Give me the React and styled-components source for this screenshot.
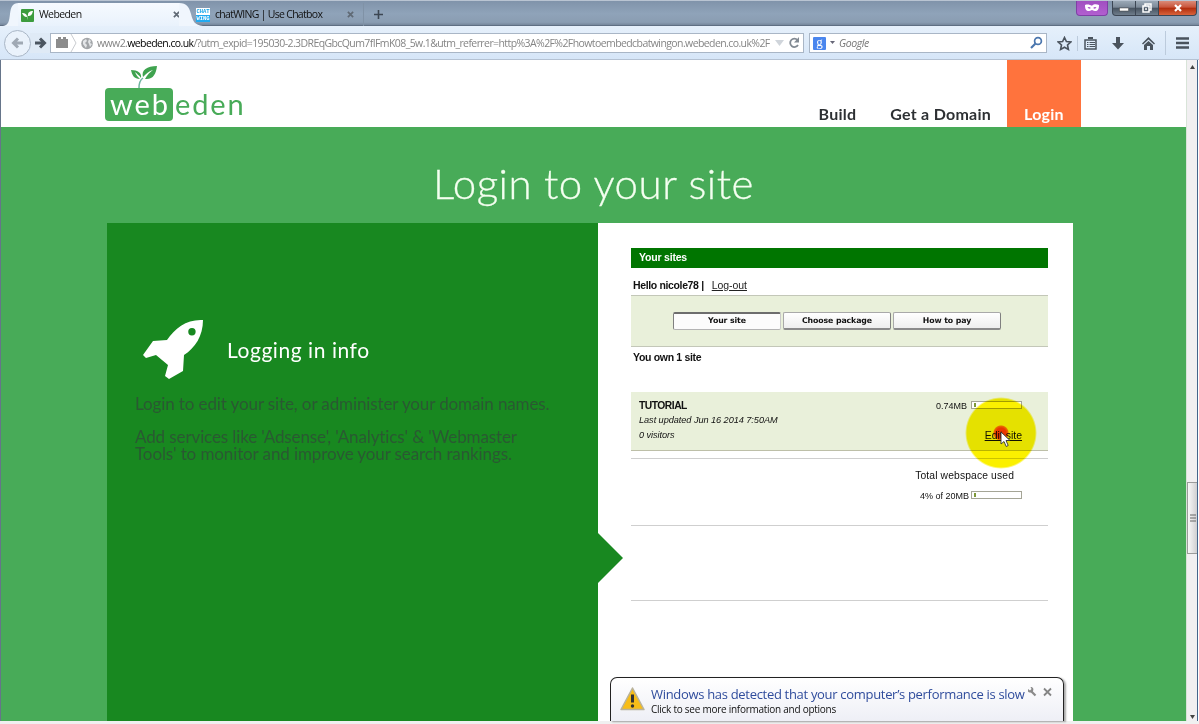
import React from 'react';
import styled, { createGlobalStyle, css } from 'styled-components';

const Global = createGlobalStyle`
  * { box-sizing: border-box; }
  html, body { margin: 0; padding: 0; overflow: hidden; }
`;

const ui = "'Open Sans', 'Noto Sans', sans-serif";
const brand = "'Lato', 'Open Sans', sans-serif";
const arial = "'Liberation Sans', Arial, sans-serif";

const Window = styled.div`
  position: relative;
  width: 1199px;
  height: 724px;
  overflow: hidden;
  display: flex;
  flex-direction: column;
  background: #f0f0f0;
`;

/* ---------- tab strip ---------- */
const TabStrip = styled.div`
  height: 26px;
  flex: none;
  display: flex;
  align-items: flex-end;
  padding-left: 3px;
  border-top: 1px solid #b9c4d2;
  background: linear-gradient(#8093aa, #8fa3b9 50%, #8a9db2 85%, #6e7f93);
  box-shadow: inset 0 -1px #5f6f83;
  font: 10.5px ${ui};
  color: #111;
`;
const Curve = styled.svg`
  display: block;
  flex: none;
  height: 23px;
`;
const ActiveTab = styled.div`
  display: flex;
  align-items: center;
  width: 162px;
  height: 23px;
  padding: 0 0 0 1px;
  margin: 0 -1px;
  background: linear-gradient(#f6faff, #e9f2fc);
`;
const Tab = styled.div`
  display: flex;
  align-items: center;
  width: 172px;
  height: 23px;
  padding: 0 9px 0 4px;
  margin-left: -11px;
  border-right: 1px solid #8092a6;
`;
const TabLabel = styled.span`
  flex: 1;
  margin-left: 5px;
  padding-bottom: 1px;
  letter-spacing: ${(p) => p.$track};
  white-space: nowrap;
`;
const NewTab = styled.div`
  display: flex;
  align-items: center;
  height: 23px;
  padding-left: 10px;
`;
const ChatIcon = styled.span`
  width: 14px;
  height: 14px;
  display: flex;
  flex-direction: column;
  font: bold 5.5px/7px 'Liberation Mono', monospace;
  text-align: center;
  background: #fff;
  color: #19a5e8;
  b + b { background: #22aaf0; color: #fff; }
`;
const WindowButtons = styled.div`
  align-self: flex-start;
  display: flex;
  margin: 0 2px 0 auto;
`;
const Private = styled.div`
  width: 32px;
  height: 15px;
  margin-right: 5px;
  display: flex;
  justify-content: center;
  align-items: center;
  border: 1px solid #7f3fa5;
  border-top: 0;
  border-radius: 0 0 4px 4px;
  background: linear-gradient(#a04fc0, #b25fd0);
`;
const WinBtn = styled.div`
  width: ${(p) => p.$w}px;
  height: 15px;
  display: flex;
  justify-content: center;
  align-items: center;
  border: 1px solid #3c4654;
  border-top: 0;
  margin-left: -1px;
  background: linear-gradient(#9aa8b6, #7c8998 45%, #46525f 50%, #6f7d8c);
  ${(p) => p.$first && css`border-bottom-left-radius: 4px;`}
  ${(p) => p.$close && css`
    background: linear-gradient(#d98b78, #c9543a 45%, #b02c0c 50%, #d9633c);
    border-bottom-right-radius: 4px;
  `}
`;

/* ---------- navigation bar ---------- */
const NavBar = styled.div`
  height: 34px;
  flex: none;
  display: flex;
  align-items: center;
  padding: 1px 9px 0 4px;
  border-bottom: 1px solid #b5c2d3;
  background: linear-gradient(#e6f0fb, #d6e6f8);
  font: 10.5px ${ui};
`;
const Back = styled.div`
  width: 27px;
  height: 27px;
  display: flex;
  justify-content: center;
  align-items: center;
  border: 1px solid #a9b6c6;
  border-radius: 50%;
  background: #eaf2fb;
  z-index: 1;
`;
const Forward = styled.div`
  width: 20px;
  height: 20px;
  margin-left: -1px;
  display: flex;
  justify-content: center;
  align-items: center;
  background: #dfeaf6;
`;
const Field = styled.div`
  display: flex;
  align-items: center;
  width: ${(p) => p.$w}px;
  height: 20px;
  margin-left: ${(p) => p.$ml || 0}px;
  border: 1px solid #a9b6c6;
  background: #fff;
`;
const Identity = styled.div`
  display: flex;
  align-items: center;
  width: 26px;
  height: 18px;
  padding-left: 4px;
`;
const Url = styled.div`
  width: 675px;
  margin-left: 2px;
  white-space: nowrap;
  letter-spacing: -0.59px;
  color: #858585;
  b { font-weight: 400; color: #000; }
`;
const SearchHint = styled.span`
  flex: 1;
  margin-left: 4px;
  font-style: italic;
  letter-spacing: -0.4px;
  color: #777;
`;
const GoogleBadge = styled.span`
  width: 13px;
  height: 13px;
  margin: 0 4px 0 3px;
  border-radius: 1px;
  background: #4a86ee;
  color: #fff;
  font: 13px/10px 'Liberation Serif', serif;
  text-align: center;
`;
const ToolIcons = styled.div`
  display: flex;
  align-items: center;
  padding-left: 10px;
`;
const ToolIcon = styled.svg`
  display: block;
  flex: none;
  margin-left: ${(p) => p.$ml || 0}px;
`;
const Separator = styled.i`
  width: 1px;
  height: ${(p) => p.$h}px;
  margin-left: ${(p) => p.$ml}px;
  background: #bccbdc;
`;

/* ---------- page ---------- */
const Viewport = styled.div`
  height: 661px;
  display: flex;
  border-left: 1px solid #66758a;
`;
const Page = styled.main`
  width: 1185px;
  height: 661px;
  overflow: hidden;
  display: flex;
  flex-direction: column;
  background: #48ab58;
`;
const Header = styled.header`
  height: 67px;
  flex: none;
  display: flex;
  justify-content: space-between;
  padding: 0 105px 0 104px;
  background: #fff;
  font-family: ${brand};
`;
const Logo = styled.div`
  display: flex;
  flex-direction: column;
  padding-top: 5px;
`;
const Sprout = styled.svg`
  display: block;
  width: 28px;
  height: 23px;
  margin-left: 26px;
`;
const Wordmark = styled.div`
  display: flex;
  font: 29px/32px ${brand};
  letter-spacing: 1.9px;
  color: #48ab58;
`;
const WebBox = styled.span`
  width: 68px;
  height: 33px;
  margin-right: 2px;
  padding-left: 5px;
  border-radius: 4px;
  background: #48ab58;
  color: #fff;
`;
const Nav = styled.nav`
  display: flex;
  align-items: flex-end;
  font: 700 16px/20px ${brand};
  letter-spacing: 0.25px;
  color: #2d3033;
`;
const NavLink = styled.a`
  padding: 0 16px 3px 18px;
  white-space: nowrap;
  ${(p) => p.$active && css`
    height: 67px;
    width: 74px;
    padding: 44px 0 3px 17px;
    background: #ff733d;
    color: #fff;
  `}
`;
const Title = styled.h1`
  height: 96px;
  flex: none;
  margin: 0;
  padding-top: 32px;
  font: 300 42px/48px ${brand};
  letter-spacing: 0.5px;
  text-align: center;
  color: #f4fff0;
  -webkit-text-stroke: 0.3px #f4fff0;
`;
const Card = styled.section`
  display: flex;
  height: 498px;
  margin-left: 106px;
  width: 966px;
  background: #fff;
`;
const Info = styled.div`
  position: relative;
  width: 491px;
  padding: 95px 28px 0;
  background: #188820;
  font: 17px/17px ${brand};
  color: #2a5832;
`;
const Pointer = styled.svg`
  position: absolute;
  left: 491px;
  top: 310px;
`;
const InfoHead = styled.div`
  display: flex;
  align-items: center;
  height: 64px;
  padding-left: 7px;
  margin-bottom: 13px;
`;
const InfoTitle = styled.h2`
  margin: 0 0 1px 23px;
  font: 400 21px/24px ${brand};
  letter-spacing: 0.55px;
  color: #fff;
`;
const InfoLine = styled.div`
  white-space: nowrap;
  letter-spacing: -0.11px;
  margin-bottom: ${(p) => p.$gap || 0}px;
`;

/* ---------- account panel ---------- */
const Account = styled.div`
  width: 475px;
  padding: 25px 25px 0 33px;
  font: 11px/14px ${arial};
  color: #111;
`;
const Bar = styled.div`
  height: 20px;
  padding-left: 8px;
  background: #007500;
  color: #fff;
  font: bold 10.5px/19px ${arial};
  letter-spacing: -0.2px;
`;
const Hello = styled.div`
  display: flex;
  height: 27px;
  padding: 10px 0 0 2px;
  font-size: 10.5px;
  b { letter-spacing: -0.36px; }
  u { margin-left: 8px; color: #222; letter-spacing: -0.05px; }
`;
const ButtonBand = styled.div`
  display: flex;
  gap: 2px;
  height: 52px;
  padding: 16px 0 0 42px;
  border: solid #c3c7b8;
  border-width: 1px 0;
  background: #e9f0da;
`;
const Button = styled.button`
  width: 108px;
  height: 18px;
  padding: 0;
  border: 1px solid #a9a9a9;
  border-right-color: #808080;
  border-bottom: 2px solid #8a8a8a;
  border-radius: 2px;
  background: linear-gradient(#fff, #eeeeee);
  font: bold 7.8px 'DejaVu Sans', sans-serif;
  letter-spacing: -0.1px;
  color: #111;
  ${(p) => p.$pressed && css`
    border-color: #6d6d6d #c9c9c9 #b4b4b4 #808080;
    border-width: 2px 1px 1px;
    padding-bottom: 2px;
    background: #fcfcfc;
  `}
`;
const Owned = styled.div`
  height: 45px;
  padding: 3px 0 0 2px;
  font-weight: bold;
  font-size: 10.5px;
  letter-spacing: -0.32px;
`;
const Site = styled.div`
  display: flex;
  justify-content: space-between;
  height: 59px;
  padding: 6px 26px 0 8px;
  border-bottom: 1px solid #bdbfa8;
  background: #e9f0da;
`;
const SiteName = styled.div`
  font: bold 10.3px/15px ${arial};
  letter-spacing: -0.5px;
`;
const SiteMeta = styled.div`
  font: italic 9.2px/15px ${arial};
  letter-spacing: -0.06px;
  white-space: nowrap;
`;
const SiteSide = styled.div`
  display: flex;
  flex-direction: column;
  align-items: flex-end;
`;
const Usage = styled.div`
  display: flex;
  align-items: center;
  justify-content: flex-end;
  gap: ${(p) => p.$gap}px;
  height: 15px;
  font-size: 9px;
`;
const Meter = styled.span`
  width: 51px;
  height: 8px;
  padding: 1px;
  margin-bottom: 2px;
  border: 1px solid #a5a596;
  background: #fff;
  &::before {
    content: '';
    display: block;
    width: 2px;
    height: 4px;
    margin-left: 1px;
    background: #7f9a38;
  }
`;
const Edit = styled.u`
  margin-top: 15px;
  font-size: 10.5px;
`;
const Totals = styled.div`
  height: 67px;
  margin-top: 7px;
  padding: 10px 26px 0 0;
  border-top: 1px solid #cfcfcf;
  text-align: right;
`;
const TotalLabel = styled.div`
  padding-right: 8px;
  margin-bottom: 5px;
  font-size: 10.3px;
  letter-spacing: 0.14px;
`;
const EmptyRow = styled.div`
  height: 76px;
  border: solid #cfcfcf;
  border-width: 1px 0;
`;

/* ---------- scrollbar ---------- */
const Scrollbar = styled.div`
  display: flex;
  flex-direction: column;
  align-items: center;
  width: 11px;
  height: 661px;
  padding: 5px 0 2px;
  border-left: 1px solid #d8e4d8;
  background: #f1eff1;
`;
const Thumb = styled.div`
  width: 10px;
  height: 72px;
  margin: 413px 0 auto;
  display: flex;
  align-items: center;
  justify-content: center;
  border: 1px solid #9b9b9b;
  border-right: 0;
  background: linear-gradient(90deg, #f8f8f8, #d0cfd1);
`;
const Edge = styled.div`
  width: 2px;
  background: #fff;
  border-left: 1px solid #44648c;
`;

/* ---------- overlays ---------- */
const Halo = styled.div`
  position: absolute;
  left: 965px;
  top: 397px;
  width: 72px;
  height: 72px;
  border-radius: 50%;
  mix-blend-mode: multiply;
  background: radial-gradient(circle at 36px 36px, #ff3a00 0 5px, #ff7200 7px, #fbf000 8px, #fbf000 34px, #fbf00000 36px);
`;
const Cursor = styled.svg`
  position: absolute;
  left: 1000px;
  top: 431px;
`;
const Balloon = styled.div`
  position: absolute;
  left: 610px;
  top: 677px;
  width: 454px;
  height: 44px;
  display: flex;
  padding: 8px 10px 0 9px;
  border: 1px solid #222;
  border-bottom: 0;
  border-radius: 7px 7px 0 0;
  background: linear-gradient(#fff, #eeeff6);
  box-shadow: 2px 1px 2px #0005;
  font-family: ${ui};
`;
const BalloonText = styled.div`
  width: 377px;
  margin-left: 6px;
  white-space: nowrap;
  font-size: 10px;
  line-height: 13px;
  letter-spacing: -0.26px;
  color: #111;
`;
const BalloonTitle = styled.div`
  font-size: 13px;
  line-height: 16px;
  height: 17px;
  letter-spacing: -0.31px;
  color: #2f4c9c;
`;
const BalloonIcon = styled.svg`
  display: block;
  flex: none;
  margin-top: ${(p) => p.$mt}px;
`;

const Cross = ({ s = 7, c = '#606a75', w = 2 }) => (
  <svg width={s} height={s} viewBox="0 0 8 8"><path d="M1 1l6 6M7 1L1 7" stroke={c} strokeWidth={w} /></svg>
);
const Arrow = ({ c, flip }) => (
  <svg width="13" height="12" viewBox="0 0 13 12" transform={flip ? 'scale(-1 1)' : undefined}>
    <path d="M1 6h9M6 1.5L10.5 6 6 10.5" fill="none" stroke={c} strokeWidth="3" />
  </svg>
);

export default function App() {
  return (
    <Window>
      <Global />
      <TabStrip>
        <Curve width="16" viewBox="0 0 16 23">
          <path d="M0 23C6 22 6 18 7 11 8 4 9 0 16 0V23Z" fill="#f0f6fd" />
        </Curve>
        <ActiveTab>
          <svg width="15" height="14" viewBox="0 0 15 14">
            <rect x="2" y="1" width="13" height="13" rx="1" fill="#3c9c3e" />
            <path d="M8 12C8 9 9 7 9 7 9 4 11 3 14 3 13 7 12 8 9 8M8 9C5 9 4 7 3 5c3 0 5 1 5 4" fill="#fff" />
          </svg>
          <TabLabel $track="-0.6px">Webeden</TabLabel>
          <Cross />
        </ActiveTab>
        <Curve width="24" viewBox="0 0 24 23">
          <path d="M0 0C8 0 10 4 12 11 14 19 16 22 24 23H0Z" fill="#f0f6fd" />
        </Curve>
        <Tab>
          <ChatIcon><b>CHAT</b><b>WING</b></ChatIcon>
          <TabLabel $track="-0.7px">chatWING | Use Chatbox</TabLabel>
          <Cross />
        </Tab>
        <NewTab>
          <svg width="9" height="9" viewBox="0 0 9 9"><path d="M4.5 0v9M0 4.5h9" stroke="#3c4652" strokeWidth="1.6" /></svg>
        </NewTab>
        <WindowButtons>
          <Private>
            <svg width="14" height="8" viewBox="0 0 14 8">
              <path fillRule="evenodd" d="M0 1c3-1 5 0 7 .8C9 0 11 0 14 1c0 4-1 6-4 6C8 7 8 6 7 6S6 7 4 7C1 7 0 5 0 1ZM2.500 3.600c1 1.400 2.500 1.400 3.300.4-1-1.300-2.500-1.300-3.300-.4Zm9 0c-1-1-2.500-.8-3.300.4 1 1 2.500 1 3.300-.4Z" fill="#fff" />
            </svg>
          </Private>
          <WinBtn $w={24} $first><svg width="10" height="8"><rect x="0.500" y="4" width="9" height="3" fill="#fff" stroke="#444" strokeWidth=".5" /></svg></WinBtn>
          <WinBtn $w={24}>
            <svg width="10" height="10" viewBox="0 0 10 10" fill="none" stroke="#fff" strokeWidth="1.500"><path d="M3 3V1h6v6H7" /><rect x="1" y="3" width="6" height="6" /><path d="M3 6h2" /></svg>
          </WinBtn>
          <WinBtn $w={39} $close><Cross s={8} c="#fff" w={2.2} /></WinBtn>
        </WindowButtons>
      </TabStrip>

      <NavBar>
        <Back><Arrow c="#a0a9b4" flip /></Back>
        <Forward><Arrow c="#4b5560" /></Forward>
        <Field $w={754}>
          <Identity>
            <svg width="22" height="18" viewBox="0 0 22 18">
              <path d="M1 5h2V3h3v2h2V3h3v2h2v9H1Z" fill="#8c8c8c" />
              <path d="M16 0l5 9-5 9" fill="none" stroke="#c9ccd0" />
            </svg>
          </Identity>
          <svg width="18" height="13" viewBox="0 0 18 13">
            <circle cx="10" cy="6.500" r="5.800" fill="#a2a5a8" />
            <path d="M6 4l3-2 1 2-2 2 2 2-1 3-3-4ZM12 2l2 2-1 2 2 1-2 3-1-3-1-2Z" fill="#e4e6e8" />
          </svg>
          <Url>www2.<b>webeden.co.uk</b>/?utm_expid=195030-2.3DREqGbcQum7fIFmK08_5w.1&amp;utm_referrer=http%3A%2F%2Fhowtoembedcbatwingon.webeden.co.uk%2F</Url>
          <svg width="30" height="14" viewBox="0 0 30 14">
            <path d="M3 4h9l-4.500 6Z" fill="#d0d5db" />
            <path d="M25.500 4A4.200 4.200 0 1 0 26 9" fill="none" stroke="#828a93" strokeWidth="1.800" /><path d="M27 1v5.500h-5Z" fill="#828a93" />
          </svg>
        </Field>
        <Field $w={238} $ml={5}>
          <GoogleBadge>g</GoogleBadge>
          <svg width="5" height="4"><path d="M0 0h5L2.500 3Z" fill="#667" /></svg>
          <SearchHint>Google</SearchHint>
          <svg width="16" height="14" viewBox="0 0 16 14" fill="none" stroke="#4a76ae"><circle cx="8" cy="5" r="3.400" strokeWidth="1.700" /><path d="M5.500 7.500L1 12" strokeWidth="2.200" /></svg>
        </Field>
        <ToolIcons>
          <ToolIcon width="15" height="15" viewBox="0 0 15 15"><path d="M7.500 1.500l1.900 4 4.300.5-3.200 3 .9 4.400-3.900-2.200-3.900 2.200.9-4.400-3.200-3 4.300-.5Z" fill="none" stroke="#4a535d" strokeWidth="1.600" /></ToolIcon>
          <Separator $h={15} $ml={5} />
          <ToolIcon $ml={6} width="13" height="13" viewBox="0 0 13 13">
            <path d="M1 3h11v9H1Z" fill="none" stroke="#4a535d" strokeWidth="1.500" />
            <path d="M4 0h5v2H4ZM3 5h1.500v1H3ZM3 7h1.500v1H3ZM3 9h1.500v1H3ZM5.500 5H11v1H5.500ZM5.500 7H11v1H5.500ZM5.500 9H11v1H5.500Z" fill="#4a535d" />
          </ToolIcon>
          <ToolIcon $ml={15} width="12" height="13" viewBox="0 0 12 13"><path d="M4 0h4v6h4L6 12.500 0 6h4Z" fill="#4a535d" /></ToolIcon>
          <ToolIcon $ml={18} width="13" height="13" viewBox="0 0 13 13"><path d="M6.500 0L13 6.500l-1 1-5.500-5-5.500 5-1-1ZM2 8l4.500-4L11 8v5H8V9H5v4H2Z" fill="#4a535d" /></ToolIcon>
          <Separator $h={24} $ml={10} />
          <ToolIcon $ml={10} width="13" height="12" viewBox="0 0 13 12"><path d="M0 1.500h13M0 6h13M0 10.500h13" stroke="#4a535d" strokeWidth="2.500" /></ToolIcon>
        </ToolIcons>
      </NavBar>

      <Viewport>
        <Page>
          <Header>
            <Logo>
              <Sprout viewBox="0 0 28 23">
                <path d="M8 23c0-5 1-8 4-10" fill="none" stroke="#6fb5a0" strokeWidth="1.500" />
                <path d="M12 12C10 5 16 1 26 1c-1 8-4 14-12 13 2-4 5-7 8-9-4 1-7 4-10 7Z" fill="#3fa34f" />
                <path d="M9 14C3 14 1 10 0 5c7 0 11 3 10 8C8 10 6 9 4 7c1 3 3 5 5 7Z" fill="#3fa34f" />
              </Sprout>
              <Wordmark><WebBox>web</WebBox>eden</Wordmark>
            </Logo>
            <Nav>
              <NavLink>Build</NavLink>
              <NavLink>Get a Domain</NavLink>
              <NavLink $active>Login</NavLink>
            </Nav>
          </Header>
          <Title>Login to your site</Title>
          <Card>
            <Info>
              <InfoHead>
                <svg width="62" height="62" viewBox="0 0 62 62">
                  <path fillRule="evenodd" d="M61 1C45 0 33 9 25 21L11 22 1 36l3 3 10-3 12 10-3 11 4 3 14-8 1-16C53 29 61 17 61 1ZM50 9a3.700 3.700 0 1 1-.1 7.400A3.700 3.700 0 0 1 50 9Z" fill="#fff" />
                </svg>
                <InfoTitle>Logging in info</InfoTitle>
              </InfoHead>
              <InfoLine $gap={16}>Login to edit your site, or administer your domain names.</InfoLine>
              <InfoLine>
                Add services like 'Adsense', 'Analytics' &amp; 'Webmaster
                <br />
                Tools' to monitor and improve your search rankings.
              </InfoLine>
              <Pointer width="26" height="50"><path d="M0 0L25 25 0 50Z" fill="#188820" /></Pointer>
            </Info>
            <Account>
              <Bar>Your sites</Bar>
              <Hello><b>Hello nicole78 |</b><u>Log-out</u></Hello>
              <ButtonBand>
                <Button $pressed>Your site</Button>
                <Button>Choose package</Button>
                <Button>How to pay</Button>
              </ButtonBand>
              <Owned>You own 1 site</Owned>
              <Site>
                <div>
                  <SiteName>TUTORIAL</SiteName>
                  <SiteMeta>Last updated Jun 16 2014 7:50AM</SiteMeta>
                  <SiteMeta>0 visitors</SiteMeta>
                </div>
                <SiteSide>
                  <Usage $gap={4}>0.74MB<Meter /></Usage>
                  <Edit>Edit site</Edit>
                </SiteSide>
              </Site>
              <Totals>
                <TotalLabel>Total webspace used</TotalLabel>
                <Usage $gap={2}>4% of 20MB<Meter /></Usage>
              </Totals>
              <EmptyRow />
            </Account>
          </Card>
        </Page>
        <Scrollbar>
          <svg width="5" height="4"><path d="M0 4h5L2.500 0Z" fill="#444" /></svg>
          <Thumb><svg width="6" height="8"><path d="M0 1h6M0 4h6M0 7h6" stroke="#666" /></svg></Thumb>
          <svg width="5" height="4"><path d="M0 0h5L2.500 4Z" fill="#444" /></svg>
        </Scrollbar>
        <Edge />
      </Viewport>

      <Halo />
      <Cursor width="11" height="17" viewBox="0 0 11 17">
        <path d="M1 1v12l3-2.500 2.200 5 2-1L6 9.500h4Z" fill="#fff" stroke="#333" strokeWidth=".9" />
      </Cursor>
      <Balloon>
        <BalloonIcon $mt={1} width="25" height="24" viewBox="0 0 25 24">
          <path d="M12.500 1L24 22.500H1Z" fill="#f7bd18" stroke="#b9b39c" strokeWidth="1.500" strokeLinejoin="round" />
          <path d="M12.500 7.500v8" stroke="#333" strokeWidth="3" /><circle cx="12.500" cy="19" r="1.700" fill="#333" />
        </BalloonIcon>
        <BalloonText>
          <BalloonTitle>Windows has detected that your computer’s performance is slow</BalloonTitle>
          Click to see more information and options
        </BalloonText>
        <BalloonIcon $mt={1} width="26" height="10" viewBox="0 0 26 10">
          <path d="M4 4l4.500 4.500" stroke="#8a8a8a" strokeWidth="2.200" />
          <path d="M1 2l2 1.500L4.500 2 3.500 0C6 0 7 2 6 4 5 6 2 6 1 4.500Z" fill="#8a8a8a" />
          <path d="M17 1.500l7 7M24 1.500l-7 7" stroke="#858585" strokeWidth="1.800" />
        </BalloonIcon>
      </Balloon>
    </Window>
  );
}
